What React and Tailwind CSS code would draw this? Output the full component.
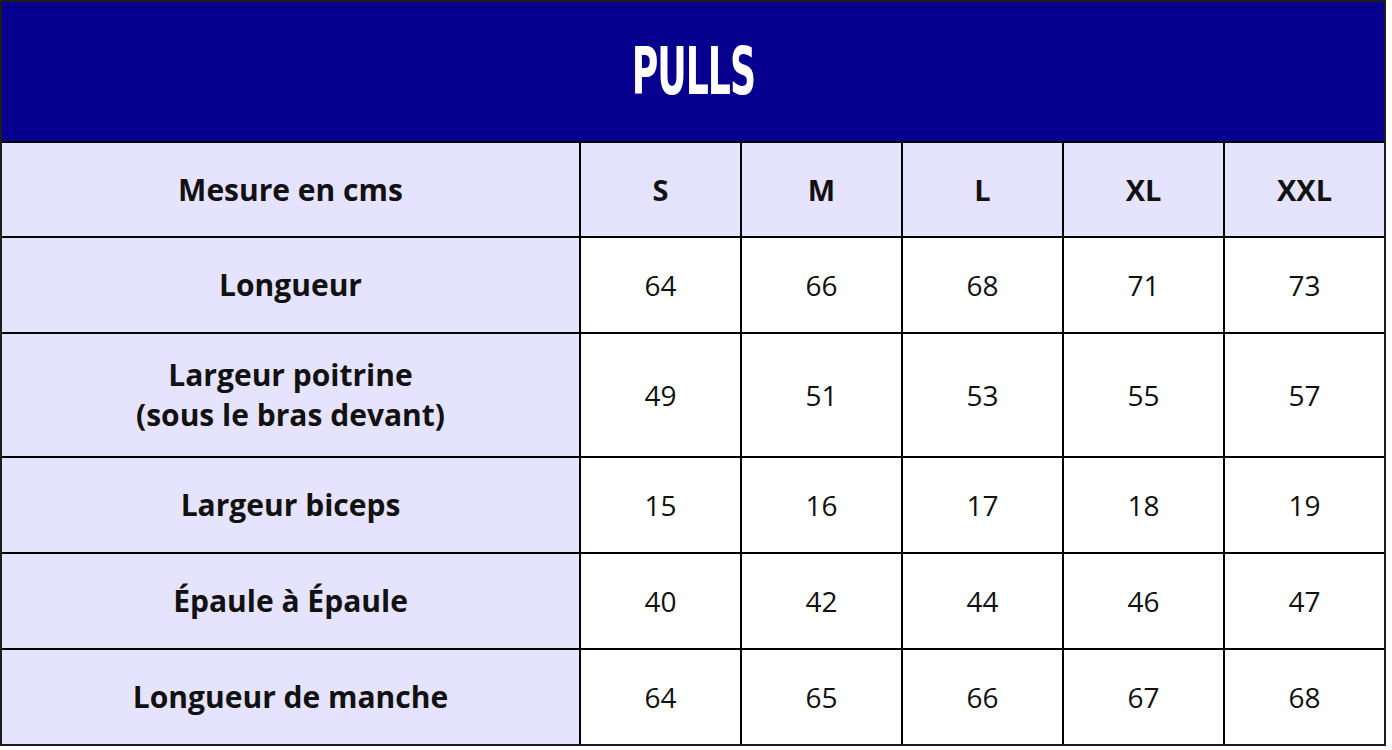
import React from "react";

const sizes = ["S", "M", "L", "XL", "XXL"];

const rows = [
  { label: ["Longueur"], values: [64, 66, 68, 71, 73], h: "h-[94px]" },
  { label: ["Largeur poitrine", "(sous le bras devant)"], values: [49, 51, 53, 55, 57], h: "h-[122px]" },
  { label: ["Largeur biceps"], values: [15, 16, 17, 18, 19], h: "h-[94px]" },
  { label: ["Épaule à Épaule"], values: [40, 42, 44, 46, 47], h: "h-[94px]" },
  { label: ["Longueur de manche"], values: [64, 65, 66, 67, 68], h: "h-[94px]" },
];

export default function App() {
  return (
    <div className="w-[1392px] h-[750px] bg-white" style={{ fontFamily: '"Open Sans", "Noto Sans", sans-serif' }}>
      <div className="w-[1386px] border-2 border-[#1c1c1c] bg-black">
        <div className="h-[139px] bg-[#07008f] flex items-center justify-center">
          <span
            className="text-white font-bold text-[65px] leading-none scale-x-[0.62] tracking-tight"
            style={{ fontFamily: '"DejaVu Sans Condensed", "DejaVu Sans", sans-serif' }}
          >
            PULLS
          </span>
        </div>
        <div className="grid grid-cols-[577px_repeat(5,1fr)] gap-[2px] pt-[2px] text-[#111] text-[28px]">
          <div className="h-[93px] bg-[#e5e3fd] flex items-center justify-center font-bold text-[30px]">Mesure en cms</div>
          {sizes.map(s => (
            <div key={s} className="h-[93px] bg-[#e5e3fd] flex items-center justify-center font-bold text-[29px]">{s}</div>
          ))}
          {rows.map((r, i) => (
            <React.Fragment key={i}>
              <div className={`${r.h} bg-[#e5e3fd] flex flex-col items-center justify-center font-bold text-[30px] leading-[40px]`}>
                {r.label.map(l => <span key={l}>{l}</span>)}
              </div>
              {r.values.map((v, j) => (
                <div key={j} className={`${r.h} bg-white flex items-center justify-center`}>{v}</div>
              ))}
            </React.Fragment>
          ))}
        </div>
      </div>
    </div>
  );
}
